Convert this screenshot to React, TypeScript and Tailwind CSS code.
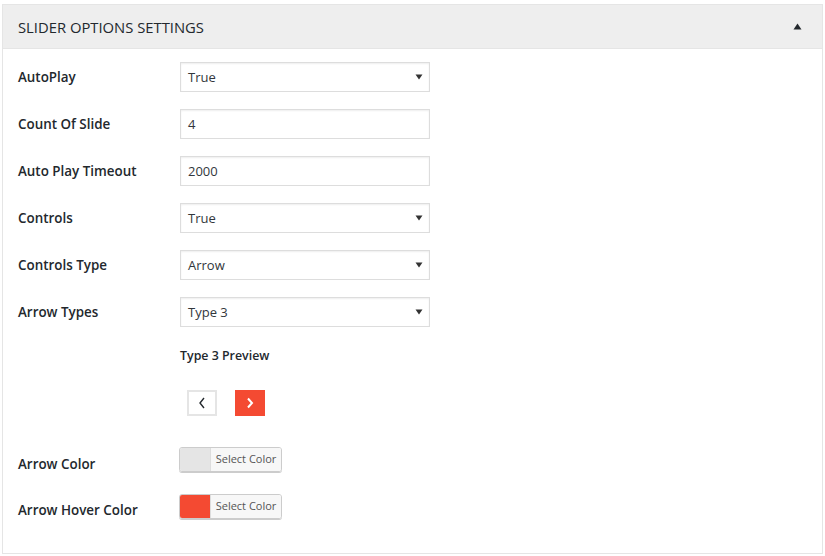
import React from 'react';

const font = { fontFamily: '"Open Sans", "Segoe UI", sans-serif' };

function Caret() {
  return (
    <svg width="8" height="6" viewBox="0 0 8 6" className="absolute right-[6px] top-1/2 -translate-y-1/2">
      <path d="M0.5 0.5h7L4 5.5z" fill="#333" />
    </svg>
  );
}

function SelectBox({ value }: { value: string }) {
  return (
    <div className="relative w-[250px] h-[30px] border border-[#dddddd] bg-white shadow-[inset_0_1px_2px_rgba(0,0,0,0.07)] flex items-center pl-[7px] pt-[2px] text-[13px] text-[#32373c]">
      {value}
      <Caret />
    </div>
  );
}

function TextBox({ value }: { value: string }) {
  return (
    <div className="w-[250px] h-[30px] border border-[#dddddd] bg-white shadow-[inset_0_1px_2px_rgba(0,0,0,0.07)] flex items-center pl-[7px] pt-[1px] text-[13px] text-[#32373c]">
      {value}
    </div>
  );
}

function ColorPick({ color }: { color: string }) {
  return (
    <div className="flex h-[25px] w-[103px] border border-[#cccccc] rounded-[3px] shadow-[0_1px_0_#cccccc] overflow-hidden -ml-[1px]">
      <div className="w-[30px] h-full" style={{ background: color }} />
      <div className="flex-1 bg-[#f7f7f7] border-l border-[#dddddd] flex items-center justify-center text-[11px] text-[#555555]">
        Select Color
      </div>
    </div>
  );
}

const rows: { label: string; kind: 'select' | 'text'; value: string }[] = [
  { label: 'AutoPlay', kind: 'select', value: 'True' },
  { label: 'Count Of Slide', kind: 'text', value: '4' },
  { label: 'Auto Play Timeout', kind: 'text', value: '2000' },
  { label: 'Controls', kind: 'select', value: 'True' },
  { label: 'Controls Type', kind: 'select', value: 'Arrow' },
  { label: 'Arrow Types', kind: 'select', value: 'Type 3' },
];

const labelCls = 'w-[162px] text-[13.4px] font-semibold text-[#23282d]';

export default function App() {
  return (
    <div className="w-[825px] h-[556px] bg-white pt-[4px] pl-[2px]" style={font}>
      <div className="w-[821px] h-[550px] border border-[#e5e5e5] bg-white">
        <div className="h-[44px] bg-[#eeeeee] border-b border-[#e5e5e5] flex items-center justify-between pl-[15px] pr-[20px]">
          <span className="text-[14.8px] text-[#23282d] pt-[1px]">SLIDER OPTIONS SETTINGS</span>
          <svg width="9" height="7" viewBox="0 0 9 7">
            <path d="M0.5 6.5h8L4.5 0.5z" fill="#23282d" />
          </svg>
        </div>

        <div className="pl-[15px] pt-[13px] flex flex-col gap-[17px]">
          {rows.map((r) => (
            <div key={r.label} className="flex items-center">
              <div className={`${labelCls} pt-[1px]`}>{r.label}</div>
              {r.kind === 'select' ? <SelectBox value={r.value} /> : <TextBox value={r.value} />}
            </div>
          ))}
        </div>

        <div className="pl-[177px] pt-[21px]">
          <div className="text-[12.4px] font-semibold text-[#23282d] leading-[16px]">Type 3 Preview</div>
          <div className="flex gap-[19px] pl-[7px] pt-[26px]">
            <div className="w-[30px] h-[26px] border-2 border-[#e5e5e5] bg-white flex items-center justify-center">
              <svg width="8" height="12" viewBox="0 0 8 12">
                <path d="M6 1L2 6l4 5" stroke="#23282d" strokeWidth="1.4" fill="none" />
              </svg>
            </div>
            <div className="w-[30px] h-[26px] -ml-[1px] bg-[#f44a32] flex items-center justify-center">
              <svg width="8" height="12" viewBox="0 0 8 12">
                <path d="M2 1.5L6 6 2 10.5" stroke="#ffffff" strokeWidth="2" fill="none" />
              </svg>
            </div>
          </div>
        </div>

        <div className="pl-[15px] pt-[31px] flex flex-col gap-[20px]">
          <div className="flex items-start">
            <div className={`${labelCls} pt-[7px]`}>Arrow Color</div>
            <ColorPick color="#e5e5e5" />
          </div>
          <div className="flex items-start">
            <div className={`${labelCls} pt-[6px]`}>Arrow Hover Color</div>
            <ColorPick color="#f44a32" />
          </div>
        </div>
      </div>
    </div>
  );
}
